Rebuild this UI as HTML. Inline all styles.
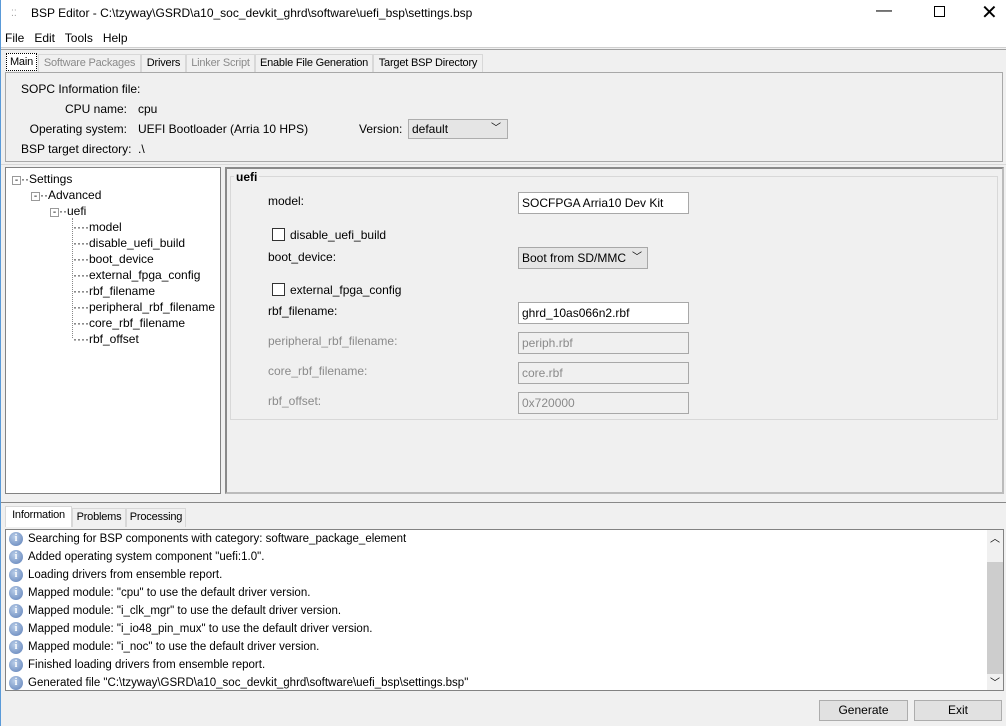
<!DOCTYPE html>
<html><head><meta charset="utf-8"><style>
*{box-sizing:border-box;margin:0;padding:0}
body{width:1006px;height:726px;background:#f0f0f0;font-family:"Liberation Sans",sans-serif;font-size:12px;color:#000;position:relative;overflow:hidden;border-left:1px solid #5a9ad8}
.a{position:absolute;white-space:nowrap}
.tb{background:#fff;border:1px solid #a0a0a0}
.dis{color:#8a8a8a}
.tab{position:absolute;top:54px;height:18px;line-height:17px;border:1px solid #d8d8d8;border-bottom:none;font-size:11px;text-align:center;white-space:nowrap;overflow:hidden;letter-spacing:-0.2px}
.lbl{position:absolute;left:267px;font-size:12px}
.box{position:absolute;left:517px;width:171px;height:22px;border:1px solid #a8a8a8;padding-left:3px;line-height:20px;font-size:12px}
.cb{position:absolute;left:271px;width:13px;height:13px;border:1px solid #333;background:#fff}
.log .m{height:18px;line-height:18px;padding-left:22px;position:relative;font-size:11.5px}
.log .m:before{content:"i";position:absolute;left:3px;top:2px;width:14px;height:14px;border-radius:50%;background:radial-gradient(circle at 40% 35%,#b8cde8,#5d7fb8);color:#fff;font-size:10px;font-weight:bold;line-height:14px;text-align:center;font-family:"Liberation Serif",serif}
.tree div{position:absolute;font-size:12px}
.btn{position:absolute;top:700px;height:21px;border:1px solid #adadad;background:#e1e1e1;text-align:center;line-height:19px}
</style></head><body>
<div class="a" style="left:0;top:0;width:1006px;height:29px;background:#fff"></div>
<div class="a" style="left:10px;top:8px;font-size:9px;color:#999">⁚⁚</div>
<div class="a" style="left:30px;top:6px;font-size:12px">BSP Editor - C:\tzyway\GSRD\a10_soc_devkit_ghrd\software\uefi_bsp\settings.bsp</div>
<div class="a" style="left:875px;top:2px;font-size:16px">—</div>
<div class="a" style="left:933px;top:6px;width:11px;height:11px;border:1px solid #000"></div>
<div class="a" style="left:980px;top:0px;font-size:20px;font-weight:300">✕</div>
<div class="a" style="left:0;top:29px;width:1006px;height:19px;background:#fff;border-bottom:1px solid #d0d0d0"></div>
<div class="a" style="left:4px;top:31px">File&nbsp;&nbsp; Edit&nbsp;&nbsp; Tools&nbsp;&nbsp; Help</div>
<div class="a" style="left:0;top:49px;width:1006px;height:1px;background:#a0a0a0"></div>
<div class="tab" style="left:5px;top:53px;width:31px;border:1px dotted #000;background:#fff">Main</div>
<div class="tab dis" style="left:37px;width:103px">Software Packages</div>
<div class="tab" style="left:140px;width:45px">Drivers</div>
<div class="tab dis" style="left:185px;width:69px">Linker Script</div>
<div class="tab" style="left:254px;width:118px">Enable File Generation</div>
<div class="tab" style="left:372px;width:110px">Target BSP Directory</div>
<div class="a" style="left:4px;top:72px;width:998px;height:90px;border:1px solid #a8a8a8"></div>
<div class="a" style="left:20px;top:82px">SOPC Information file:</div>
<div class="a" style="left:20px;top:102px;width:106px;text-align:right">CPU name:</div>
<div class="a" style="left:137px;top:102px">cpu</div>
<div class="a" style="left:20px;top:122px;width:106px;text-align:right">Operating system:</div>
<div class="a" style="left:137px;top:122px">UEFI Bootloader (Arria 10 HPS)</div>
<div class="a" style="left:358px;top:122px">Version:</div>
<div class="a" style="left:407px;top:119px;width:100px;height:20px;border:1px solid #adadad;background:#e5e5e5;padding-left:3px;line-height:18px">default<span style="position:absolute;right:6px;top:0;font-size:10px">﹀</span></div>
<div class="a" style="left:20px;top:142px;width:106px;text-align:right">BSP target directory:</div>
<div class="a" style="left:137px;top:142px">.\</div>
<div class="a" style="left:0;top:164px;width:1006px;height:1px;background:#d8d8d8"></div>
<div class="a tree" style="left:4px;top:167px;width:216px;height:327px;background:#fff;border:1px solid #828282">
<div style="left:6px;top:4px"><span style="font-size:10px;border:1px solid #999;display:inline-block;width:9px;height:9px;line-height:7px;text-align:center">-</span>··Settings</div>
<div style="left:25px;top:20px"><span style="font-size:10px;border:1px solid #999;display:inline-block;width:9px;height:9px;line-height:7px;text-align:center">-</span>··Advanced</div>
<div style="left:44px;top:36px"><span style="font-size:10px;border:1px solid #999;display:inline-block;width:9px;height:9px;line-height:7px;text-align:center">-</span>··uefi</div>
<div style="left:66px;top:50px;width:1px;height:120px;border-left:1px dotted #888"></div>
<div style="left:67px;top:52px">····model</div>
<div style="left:67px;top:68px">····disable_uefi_build</div>
<div style="left:67px;top:84px">····boot_device</div>
<div style="left:67px;top:100px">····external_fpga_config</div>
<div style="left:67px;top:116px">····rbf_filename</div>
<div style="left:67px;top:132px">····peripheral_rbf_filename</div>
<div style="left:67px;top:148px">····core_rbf_filename</div>
<div style="left:67px;top:164px">····rbf_offset</div>
</div>
<div class="a" style="left:224px;top:167px;width:779px;height:327px;border:2px solid #8a8a8a;border-right-color:#bbb;border-bottom-color:#bbb"></div>
<div class="a" style="left:229px;top:176px;width:768px;height:244px;border:1px solid #d8d8d8"></div>
<div class="a" style="left:233px;top:170px;font-weight:bold;background:#f0f0f0;padding:0 2px">uefi</div>
<div class="lbl" style="top:194px">model:</div>
<div class="box tb" style="top:192px;border-color:#a8a8a8">SOCFPGA Arria10 Dev Kit</div>
<div class="cb" style="top:228px"></div><div class="lbl" style="left:289px;top:228px">disable_uefi_build</div>
<div class="lbl" style="top:250px">boot_device:</div>
<div class="box" style="top:247px;width:130px;background:#e5e5e5">Boot from SD/MMC<span style="position:absolute;right:5px;top:0;font-size:10px">﹀</span></div>
<div class="cb" style="top:283px"></div><div class="lbl" style="left:289px;top:283px">external_fpga_config</div>
<div class="lbl" style="top:304px">rbf_filename:</div>
<div class="box tb" style="top:302px;border-color:#a8a8a8">ghrd_10as066n2.rbf</div>
<div class="lbl dis" style="top:334px">peripheral_rbf_filename:</div>
<div class="box dis" style="top:332px">periph.rbf</div>
<div class="lbl dis" style="top:364px">core_rbf_filename:</div>
<div class="box dis" style="top:362px">core.rbf</div>
<div class="lbl dis" style="top:394px">rbf_offset:</div>
<div class="box dis" style="top:392px">0x720000</div>
<div class="a" style="left:0;top:502px;width:1006px;height:1px;background:#888"></div>
<div class="tab" style="left:4px;top:506px;width:67px;height:21px;background:#fff;border-color:#d8d8d8">Information</div>
<div class="tab" style="left:71px;top:508px;width:54px;height:19px">Problems</div>
<div class="tab" style="left:125px;top:508px;width:60px;height:19px">Processing</div>
<div class="a log" style="left:4px;top:529px;width:999px;height:162px;background:#fff;border:1px solid #828282">
<div class="m">Searching for BSP components with category: software_package_element</div>
<div class="m">Added operating system component "uefi:1.0".</div>
<div class="m">Loading drivers from ensemble report.</div>
<div class="m">Mapped module: "cpu" to use the default driver version.</div>
<div class="m">Mapped module: "i_clk_mgr" to use the default driver version.</div>
<div class="m">Mapped module: "i_io48_pin_mux" to use the default driver version.</div>
<div class="m">Mapped module: "i_noc" to use the default driver version.</div>
<div class="m">Finished loading drivers from ensemble report.</div>
<div class="m">Generated file "C:\tzyway\GSRD\a10_soc_devkit_ghrd\software\uefi_bsp\settings.bsp"</div>
<div style="position:absolute;right:0;top:0;width:16px;height:160px;background:#f0f0f0"></div>
<div style="position:absolute;right:0;top:32px;width:16px;height:112px;background:#cdcdcd"></div>
<div style="position:absolute;right:3px;top:0;font-size:10px">︿</div>
<div style="position:absolute;right:3px;top:144px;font-size:10px">﹀</div>
</div>
<div class="btn" style="left:818px;width:89px">Generate</div>
<div class="btn" style="left:913px;width:88px">Exit</div>
</body></html>
